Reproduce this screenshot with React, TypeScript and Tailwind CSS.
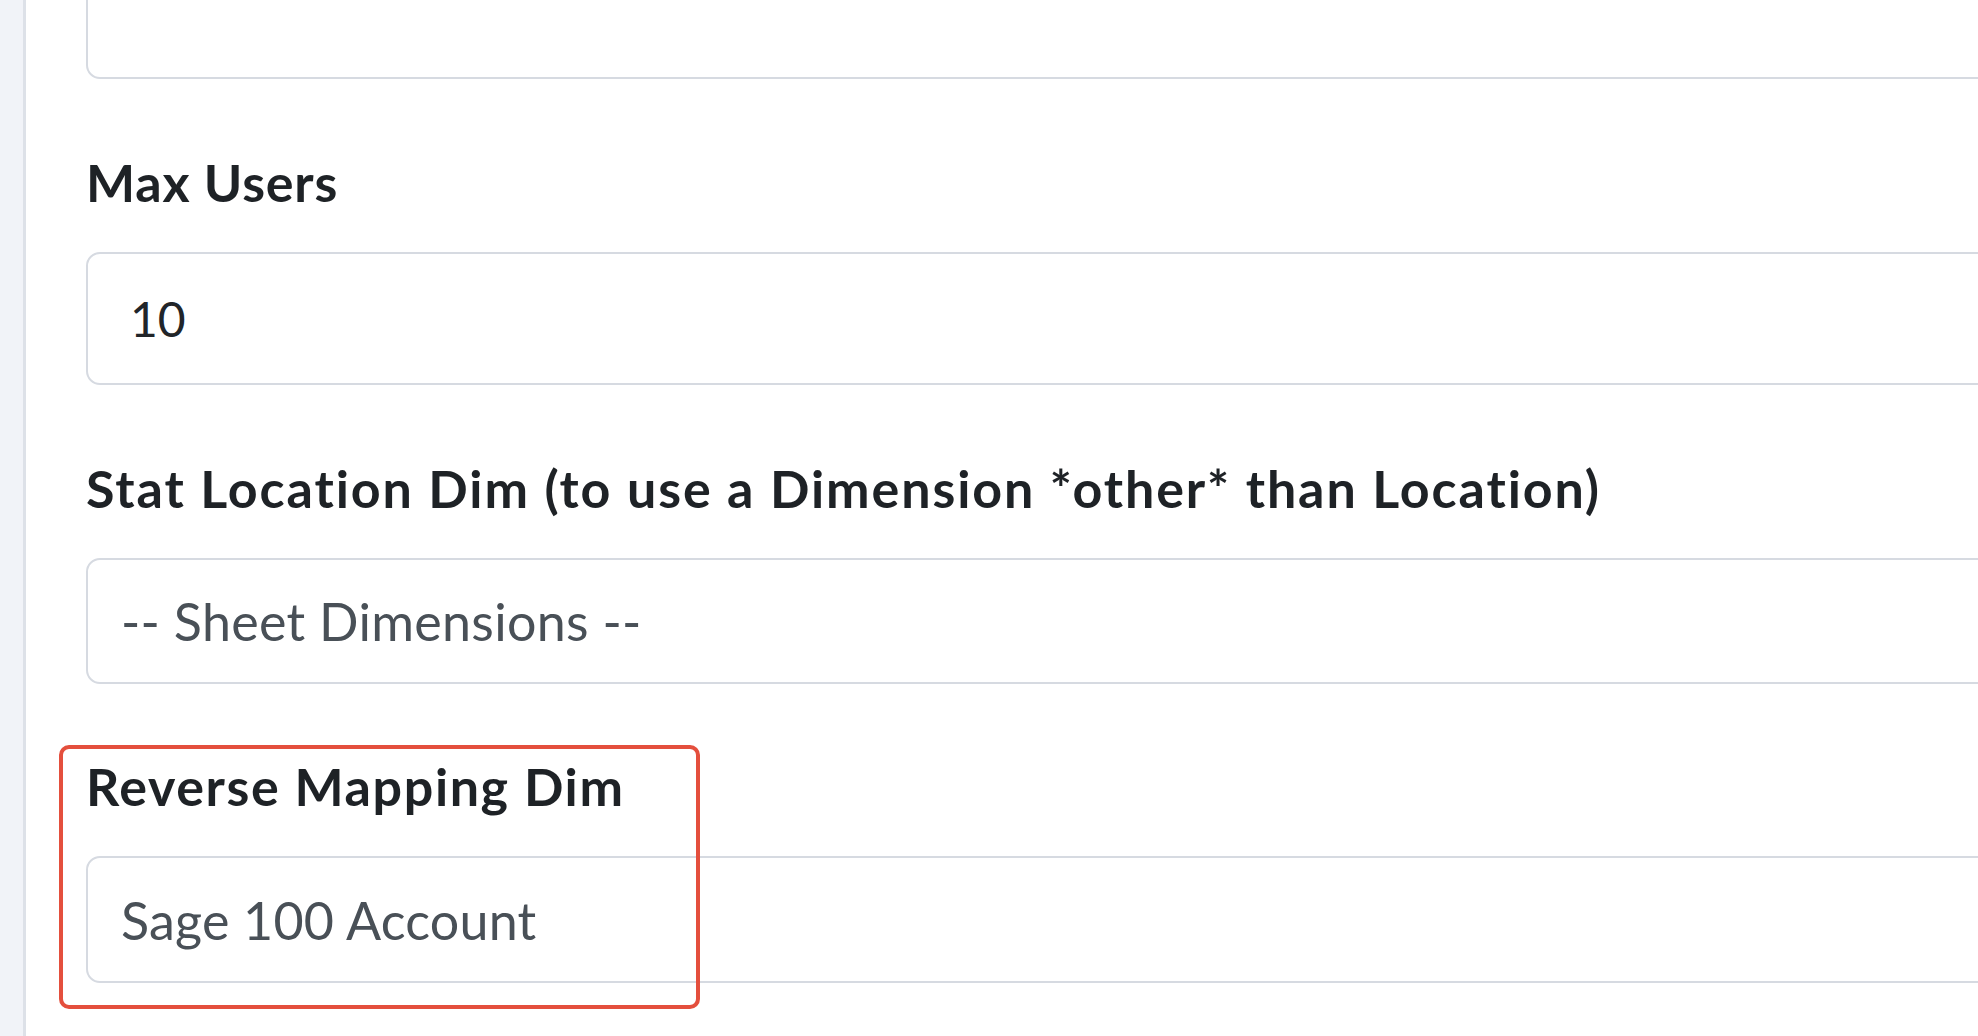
export default function App() {
  return (
    <div className="flex h-[1036px] w-full overflow-hidden bg-white font-['Lato',sans-serif] [font-variant-ligatures:none]">
      {/* sidebar edge */}
      <div className="h-full w-[26px] shrink-0 border-r-[3px] border-[#dde1e8] bg-[#f1f3f8]" />

      <div className="min-w-0 flex-1 overflow-hidden pl-[60px]">
        <div className="flex w-[2000px] flex-col">
          {/* field above, cut off at top */}
          <div className="-mt-[48px] h-[127px] rounded-[14px] border-2 border-[#d6dae1] bg-white" />

          <label className="mt-[73px] text-[52px] leading-[60px] font-bold tracking-[0.8px] text-[#1e2226]">Max Users</label>
          <div className="mt-[40px] flex h-[133px] items-center rounded-[14px] border-2 border-[#d6dae1] bg-white pl-[42px] text-[48px] text-[#212529]">
            10
          </div>

          <label className="mt-[73px] text-[52px] leading-[60px] font-bold tracking-[1.9px] text-[#1e2226]">
            Stat Location Dim (to use a Dimension *other* than Location)
          </label>
          <div className="mt-[40px] flex h-[126px] items-center rounded-[14px] border-2 border-[#d6dae1] bg-white pl-[33px] text-[52px] tracking-[0.3px] text-[#495057]">
            -- Sheet Dimensions --
          </div>

          <div className="relative mt-[72px] flex flex-col">
            <label className="text-[52px] leading-[60px] font-bold tracking-[1.6px] text-[#1e2226]">Reverse Mapping Dim</label>
            <div className="mt-[40px] flex h-[127px] items-center rounded-[14px] border-2 border-[#d6dae1] bg-white pl-[33px] text-[52px] tracking-[0.2px] text-[#495057]">
              Sage 100 Account
            </div>
            {/* highlight */}
            <div className="pointer-events-none absolute top-[-11px] left-[-27px] h-[264px] w-[641px] rounded-[10px] border-4 border-[#e44f3d]" />
          </div>
        </div>
      </div>
    </div>
  );
}
